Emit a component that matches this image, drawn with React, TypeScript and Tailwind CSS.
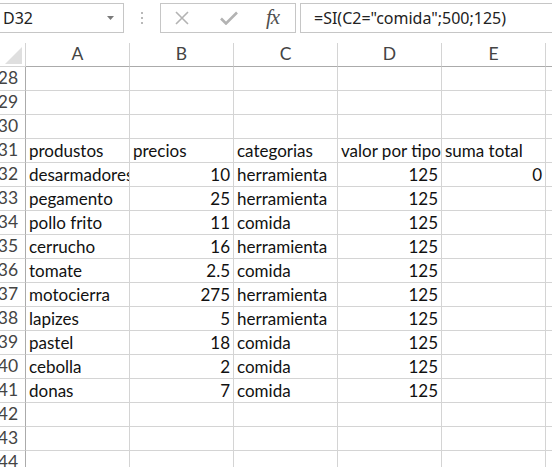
import React from "react";

const data: (string | number)[][] = [
  [],
  [],
  [],
  ["produstos", "precios", "categorias", "valor por tipo", "suma total"],
  ["desarmadores", 10, "herramienta", 125, 0],
  ["pegamento", 25, "herramienta", 125],
  ["pollo frito", 11, "comida", 125],
  ["cerrucho", 16, "herramienta", 125],
  ["tomate", 2.5, "comida", 125],
  ["motocierra", 275, "herramienta", 125],
  ["lapizes", 5, "herramienta", 125],
  ["pastel", 18, "comida", 125],
  ["cebolla", 2, "comida", 125],
  ["donas", 7, "comida", 125],
  [],
  [],
  [],
];

const cellFont = { fontFamily: "Lato, 'Open Sans', sans-serif" };

export default function App() {
  const cols = ["A", "B", "C", "D", "E"];
  return (
    <div className="w-[552px] h-[467px] overflow-hidden bg-white relative select-none">
      {/* formula bar */}
      <div className="h-[43px] flex items-start pt-[3px]">
        <div className="ml-[-1px] w-[125px] h-[30px] border border-[#c6c6c6] flex items-center justify-between pl-[3px] pr-[9px]">
          <span className="text-[16px] text-[#222]" style={{ fontFamily: "'Noto Sans', 'Open Sans', sans-serif" }}>D32</span>
          <svg width="7" height="4" viewBox="0 0 7 4"><path d="M0 0 L7 0 L3.5 4 Z" fill="#7a7a7a" /></svg>
        </div>
        <div className="w-[37px] h-[30px] flex flex-col items-center justify-center gap-[3px] ml-[-1px]">
          <div className="w-[2px] h-[2px] bg-[#b9b9b9]" />
          <div className="w-[2px] h-[2px] bg-[#b9b9b9]" />
          <div className="w-[2px] h-[2px] bg-[#b9b9b9]" />
        </div>
        <div className="w-[136px] h-[30px] border border-[#c6c6c6] flex items-center">
          <svg className="ml-[14px]" width="14" height="14" viewBox="0 0 14 14">
            <path d="M1 1 L13 13 M13 1 L1 13" stroke="#b3b3b3" strokeWidth="1.6" />
          </svg>
          <svg className="ml-[31px]" width="18" height="14" viewBox="0 0 18 14">
            <path d="M1 7.5 L6 12.5 L17 1.5" stroke="#b3b3b3" strokeWidth="2.6" fill="none" />
          </svg>
          <span className="ml-[28px] mb-[2px] text-[21px] italic text-[#505050] leading-none tracking-[-1px]" style={{ fontFamily: "'Liberation Serif', serif" }}>
            fx
          </span>
        </div>
        <div className="ml-[4px] flex-1 h-[30px] border border-[#c6c6c6] border-r-0 flex items-center pl-[13px]">
          <span className="text-[16px] text-[#222] whitespace-nowrap" style={{ fontFamily: "'Noto Sans', 'Open Sans', sans-serif" }}>
            =SI(C2="comida";500;125)
          </span>
        </div>
      </div>

      {/* column header */}
      <div className="flex h-[24px]" style={cellFont}>
        <div className="w-[26px] h-[24px] border-r border-b border-[#d4d4d4] relative">
          <svg className="absolute left-[5px] top-[4px]" width="17" height="17" viewBox="0 0 17 17">
            <path d="M17 0 L17 17 L0 17 Z" fill="#dfdfdf" />
          </svg>
        </div>
        {cols.map((c) => (
          <div
            key={c}
            className="w-[104px] h-[24px] border-r border-b border-r-[#d4d4d4] border-b-[#ababab] flex items-center justify-center text-[17.5px] text-[#444]"
          >
            {c}
          </div>
        ))}
        <div className="flex-1 h-[24px] border-b border-[#ababab]" />
      </div>

      {/* rows */}
      <div style={cellFont}>
        {data.map((row, i) => (
          <div key={i} className="flex h-[24px]">
            <div className="w-[26px] h-[24px] border-r border-b border-r-[#ababab] border-b-[#d4d4d4] flex items-center justify-center text-[17.5px] text-[#444] overflow-visible">
              <span className="ml-[-9px]">{28 + i}</span>
            </div>
            {cols.map((c, j) => {
              const v = row[j];
              const isNum = typeof v === "number";
              return (
                <div
                  key={c}
                  className={`w-[104px] h-[24px] border-r border-b border-[#d4d4d4] flex items-center pt-[1px] overflow-hidden whitespace-nowrap text-[17px] text-[#111] px-[3px] ${isNum ? "justify-end" : "justify-start"}`}
                >
                  {v === undefined ? "" : String(v)}
                </div>
              );
            })}
            <div className="flex-1 h-[24px] border-b border-[#d4d4d4]" />
          </div>
        ))}
      </div>
    </div>
  );
}
